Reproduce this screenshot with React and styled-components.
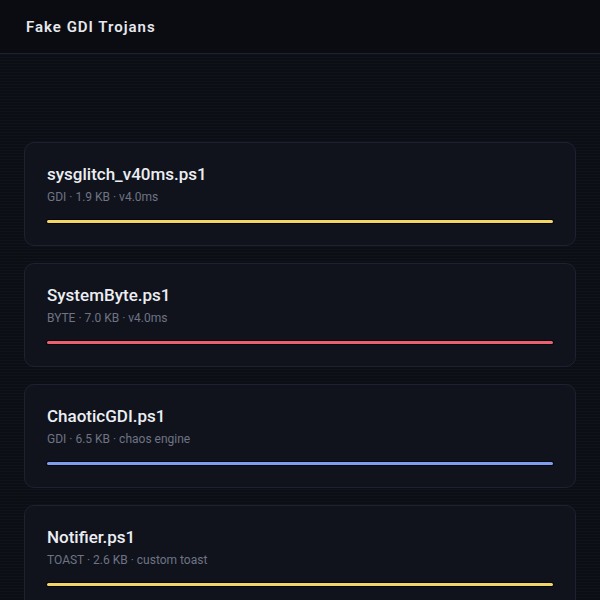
import React from 'react'
import styled, { createGlobalStyle } from 'styled-components'

const Global = createGlobalStyle`
  html, body { margin: 0; padding: 0; background: #0a0b11; }
  body { font-family: Roboto, "Noto Sans", "Liberation Sans", sans-serif; }
  * { box-sizing: border-box; }
`

const Page = styled.div`
  min-height: 600px;
  background: #0b0d14;
`

const Header = styled.header`
  height: 54px;
  display: flex;
  align-items: center;
  padding: 0 26px;
  background: #0b0b12;
  border-bottom: 1px solid #1c2030;
`

const Heading = styled.h1`
  margin: 0;
  font-size: 15px;
  font-weight: 600;
  letter-spacing: 1px;
  color: #e6e8ee;
`

const Main = styled.main`
  display: flex;
  flex-direction: column;
  gap: 17px;
  padding: 88px 24px 24px;
  background:
    repeating-linear-gradient(
      to bottom,
      rgba(255, 255, 255, 0.018) 0px,
      rgba(255, 255, 255, 0.018) 1px,
      rgba(0, 0, 0, 0) 1px,
      rgba(0, 0, 0, 0) 3px
    ),
    #0c0e15;
`

const Card = styled.section`
  border: 1px solid #1e2230;
  border-radius: 10px;
  background: rgba(17, 20, 29, 0.9);
  padding: 19px 22px 22px;
  height: 104px;
`

const Name = styled.div`
  font-size: 17px;
  font-weight: 500;
  color: #eceef3;
  line-height: 24px;
`

const Meta = styled.div`
  margin-top: 3px;
  font-size: 12px;
  color: #6e7484;
  line-height: 16px;
`

const Bar = styled.div`
  margin-top: 15px;
  height: 3px;
  border-radius: 2px;
  background: ${p => p.$color};
  box-shadow: 0 0 0 1px rgba(0, 0, 0, 0.6);
`

const scripts = [
  { name: 'sysglitch_v40ms.ps1', meta: 'GDI · 1.9 KB · v4.0ms', color: '#f3d467' },
  { name: 'SystemByte.ps1', meta: 'BYTE · 7.0 KB · v4.0ms', color: '#ec5f73' },
  { name: 'ChaoticGDI.ps1', meta: 'GDI · 6.5 KB · chaos engine', color: '#7f9cf0' },
  { name: 'Notifier.ps1', meta: 'TOAST · 2.6 KB · custom toast', color: '#f3d467' },
]

export default function App() {
  return (
    <Page>
      <Global />
      <Header>
        <Heading>Fake GDI Trojans</Heading>
      </Header>
      <Main>
        {scripts.map(s => (
          <Card key={s.name}>
            <Name>{s.name}</Name>
            <Meta>{s.meta}</Meta>
            <Bar $color={s.color} />
          </Card>
        ))}
      </Main>
    </Page>
  )
}
